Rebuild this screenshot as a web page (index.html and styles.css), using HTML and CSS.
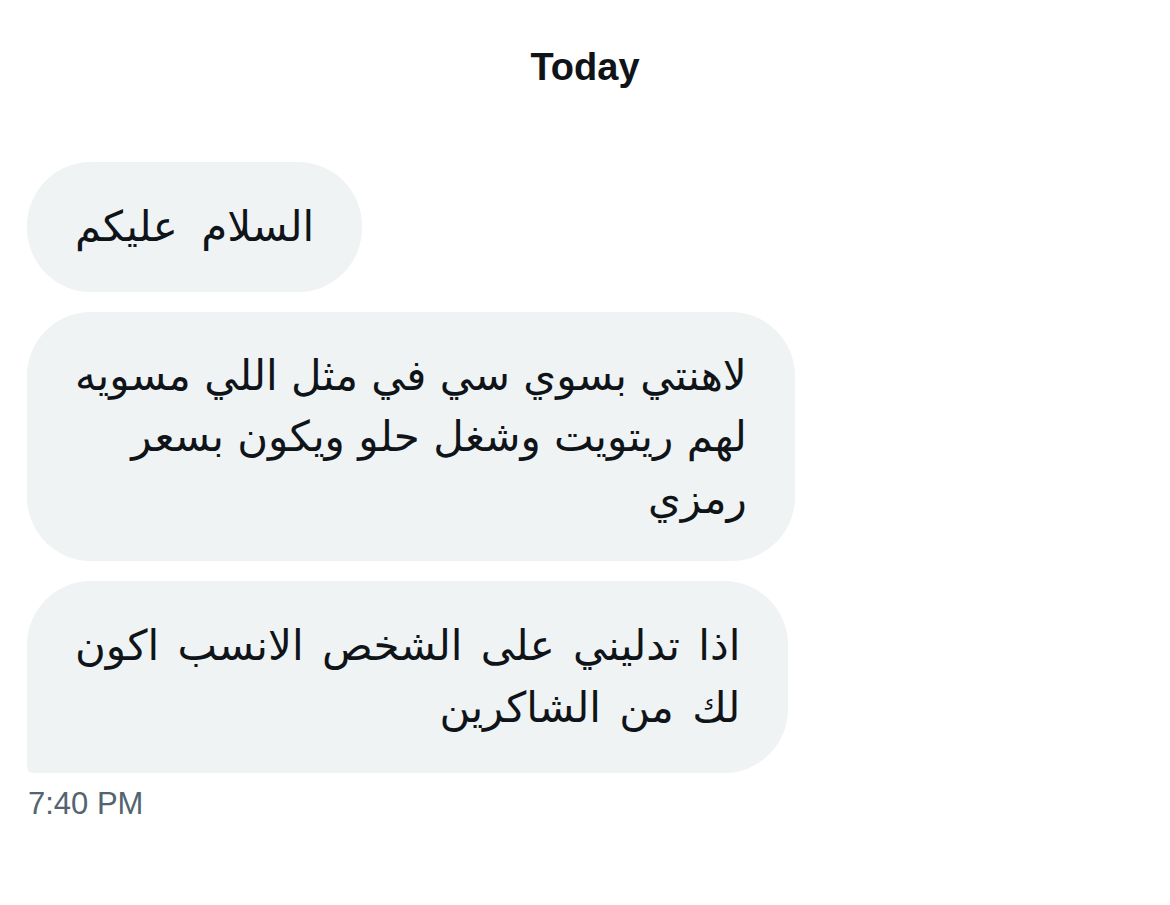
FILE: index.html
```html
<!DOCTYPE html>
<html lang="ar">
<head>
<meta charset="utf-8">
<title>Messages</title>
<link rel="stylesheet" href="styles.css">
</head>
<body>
<div class="conversation">
  <div class="day">Today</div>
  <div class="messages">
    <div class="bubble greeting" dir="rtl">السلام عليكم</div>
    <div class="bubble" dir="rtl">لاهنتي بسوي سي في مثل اللي مسويه<br>لهم ريتويت وشغل حلو ويكون بسعر<br>رمزي</div>
    <div class="bubble last" dir="rtl">اذا تدليني على الشخص الانسب اكون<br>لك من الشاكرين</div>
  </div>
  <div class="time">7:40 PM</div>
</div>
</body>
</html>
```

FILE: styles.css
```css
html, body {
  margin: 0;
  padding: 0;
  background: #ffffff;
}

.conversation {
  width: 1170px;
  height: 905px;
  box-sizing: border-box;
  padding: 43px 0 0 27px;
  font-family: "DejaVu Sans", "Noto Sans", sans-serif;
  color: #0f1419;
}

.day {
  text-align: center;
  font-family: "Liberation Sans", Arial, sans-serif;
  font-weight: bold;
  font-size: 38px;
  line-height: 48px;
  padding-right: 27px;
  margin-bottom: 71px;
}

.messages {
  display: flex;
  flex-direction: column;
  align-items: flex-start;
  gap: 20px;
}

.bubble {
  background: #eff3f4;
  border-radius: 64px;
  padding: 33px 48px 32px 48px;
  font-size: 42px;
  line-height: 61.5px;
  text-align: right;
}

.bubble.greeting {
  padding-top: 34px;
  padding-bottom: 34px;
  word-spacing: 10px;
}

.bubble.last {
  border-bottom-left-radius: 6px;
  word-spacing: 5px;
  padding-top: 34px;
  padding-bottom: 35px;
}

.time {
  margin-top: 13px;
  padding-left: 1px;
  font-family: "Liberation Sans", Arial, sans-serif;
  font-size: 31px;
  line-height: 36px;
  color: #536471;
}
```
